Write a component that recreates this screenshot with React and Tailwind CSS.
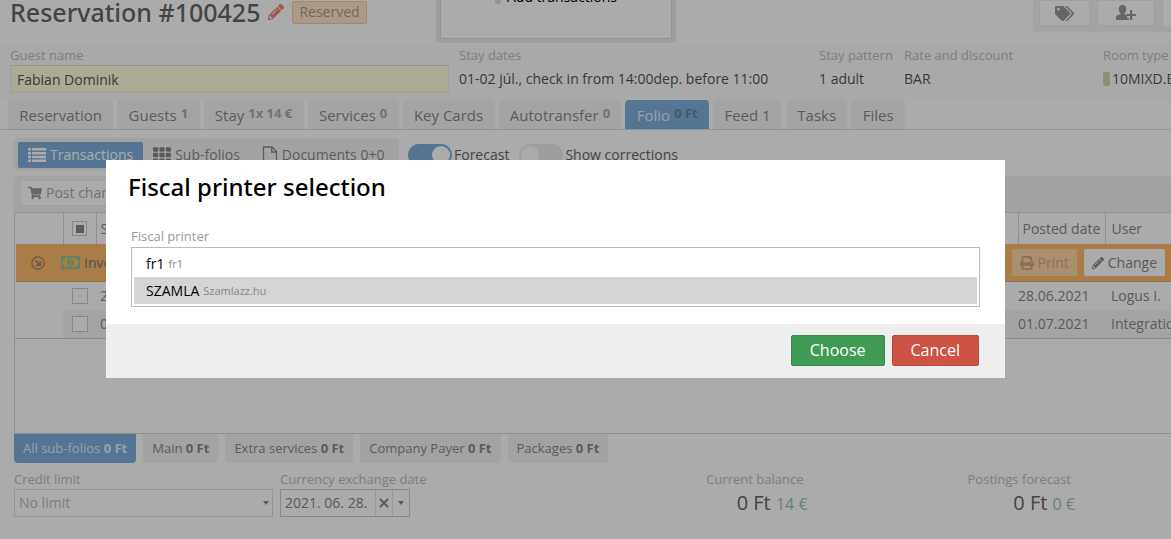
import React, { useState } from 'react';
import { FaPencilAlt, FaTags, FaTh, FaShoppingCart, FaPrint } from 'react-icons/fa';

const tabs = [
  { name: 'Reservation' },
  { name: 'Guests', badge: '1' },
  { name: 'Stay', badge: '1x 14 €' },
  { name: 'Services', badge: '0' },
  { name: 'Key Cards' },
  { name: 'Autotransfer', badge: '0' },
  { name: 'Folio', badge: '0 Ft' },
  { name: 'Feed 1' },
  { name: 'Tasks' },
  { name: 'Files' },
];

const subFolios = ['All sub-folios', 'Main', 'Extra services', 'Company Payer', 'Packages'];

const postings = [
  { id: 1, start: '28.06.2021', posted: '28.06.2021', user: 'Logus I.' },
  { id: 2, start: '01.07.2021', posted: '01.07.2021', user: 'Integration' },
];

const printers = [
  { code: 'fr1', title: 'fr1' },
  { code: 'SZAMLA', title: 'Szamlazz.hu' },
];

function UserPlusIcon() {
  return (
    <svg viewBox="0 0 20 16" className="w-5 h-4" fill="currentColor">
      <path d="M6.500 0C8.700 0 10.200 1.500 10.200 4c0 1.700-.7 3.300-1.700 4.200v1l2.500 1v2.500h1.800V15H0v-2.500c0-1.200.6-1.800 1.600-2.200l2.900-1.100v-1C3.500 7.300 2.800 5.700 2.800 4 2.800 1.500 4.300 0 6.500 0z" />
      <path d="M14 5h2.200v3.900H20v2.200h-3.800V15H14v-3.900h-3.500V8.900H14z" />
    </svg>
  );
}

function ListIcon() {
  return (
    <svg viewBox="0 0 18 14" className="w-[18px] h-3.5" fill="currentColor">
      <path d="M0 0h3v2.500H0zM0 4h3v2.500H0zM0 7.800h3v2.500H0zM0 11.500h3V14H0zM4 0h14v2.500H4zM4 4h14v2.500H4zM4 7.800h14v2.500H4zM4 11.500h14V14H4z" />
    </svg>
  );
}

function FileIcon() {
  return (
    <svg viewBox="0 0 16 18" className="w-4 h-[18px]" fill="none" stroke="currentColor" strokeWidth="1.300">
      <path d="M1.500 1h8.500l4.500 4.500V17h-13zM9.700 1v5h4.800" />
    </svg>
  );
}

function MoneyIcon() {
  return (
    <svg viewBox="0 0 19 13" className="w-[19px] h-[13px] text-[#7fc69a]">
      <path fill="currentColor" fillRule="evenodd" d="M0 0h19v13H0zM4 1.500A2.500 2.500 0 0 1 1.500 4v5A2.500 2.500 0 0 1 4 11.500h11A2.500 2.500 0 0 1 17.500 9V4A2.500 2.500 0 0 1 15 1.500z" />
      <ellipse cx="9.500" cy="6.500" rx="3.200" ry="4.200" fill="currentColor" />
      <path d="M8.300 5l1.400-1v4.700M8 9h3.200" stroke="#fcba6c" strokeWidth="1.100" fill="none" />
    </svg>
  );
}

function CollapseIcon() {
  return (
    <svg viewBox="0 0 14 14" className="w-3.5 h-3.5 text-[#9a8368]" fill="none" stroke="currentColor" strokeWidth="1.300">
      <circle cx="7" cy="7" r="6.200" />
      <path d="M4.500 4.500l4.500 4.500M9.300 5v4.300H5" strokeWidth="1.600" />
    </svg>
  );
}

function Caret() {
  return (
    <svg viewBox="0 0 6 4" className="w-1.5 h-1 text-[#888]" fill="currentColor">
      <path d="M0 0h6L3 4z" />
    </svg>
  );
}

function Toggle({ id, label, checked, onChange }) {
  return (
    <div className="flex items-center gap-0.5">
      <input id={id} type="checkbox" role="switch" className="sr-only" checked={checked} onChange={onChange} />
      <label
        htmlFor={id}
        aria-label={label}
        className={`flex items-center w-11 h-[22px] rounded-full p-0.5 ${checked ? 'justify-end bg-[#7eafdc]' : 'justify-start bg-[#ececec]'}`}
      >
        <span className="w-[18px] h-[18px] rounded-full bg-white" />
      </label>
      <label htmlFor={id} className="text-sm text-[#666]">{label}</label>
    </div>
  );
}

function Info({ label, children }) {
  return (
    <div className="whitespace-nowrap">
      <p className="text-[13px] leading-5 text-[#bbb]">{label}</p>
      <p className="text-sm leading-7 text-[#555]">{children}</p>
    </div>
  );
}

function Balance({ label, amount, foreign }) {
  return (
    <div className="text-right whitespace-nowrap">
      <p className="pr-1 text-[13px] leading-5 text-[#bbb]">{label}</p>
      <p className="text-xl leading-7 text-[#666]">
        {amount} <span className="text-base text-[#9bbfae]">{foreign}</span>
      </p>
    </div>
  );
}

function Header() {
  return (
    <header className="relative flex justify-between h-[45px] pl-2.5">
      <div className="flex items-center h-6 gap-2">
        <h1 className="font-['Noto_Sans'] font-medium text-[25px] leading-6 text-[#666]">Reservation #100425</h1>
        <button type="button" aria-label="Edit" className="text-[#ef8277] text-base"><FaPencilAlt /></button>
        <span className="h-[23px] px-1.5 border border-[#f5cf94] bg-[#ffe6cb] rounded-xs text-sm leading-5 text-[#b09a80]">Reserved</span>
      </div>
      <div className="absolute right-[495px] bottom-0.5 w-60 h-16 bg-[#eee] rounded-b p-1">
        <div className="h-full border border-[#ddd] bg-white flex justify-center gap-1.5 text-sm text-black">
          <span className="w-1.5 h-1.5 mt-3.5 rounded-full bg-[#ddd]" />
          <span className="leading-[26px]">Add transactions</span>
        </div>
      </div>
      <div className="flex gap-[7px] h-8 pl-1.5 pb-1.5 rounded-bl bg-[#f4f4f4]">
        <button type="button" aria-label="Tags" className="flex items-center justify-center w-[51px] h-[26px] bg-white border border-[#eee] rounded-xs text-[19px] text-[#999]"><FaTags /></button>
        <button type="button" aria-label="Add guest" className="flex items-center justify-center w-[58px] h-[26px] bg-white border border-[#eee] rounded-xs text-[#999]"><UserPlusIcon /></button>
        <button type="button" aria-label="More" className="w-[9px] h-[26px] bg-white border-l border-[#eee]" />
      </div>
    </header>
  );
}

function PrinterDialog() {
  const [selected, setSelected] = useState('SZAMLA');

  return (
    <div className="fixed inset-0 bg-black/33 flex items-center justify-center pr-[60px] pb-0.5">
      <div role="dialog" aria-labelledby="dialog-title" className="w-full max-w-[899px] bg-white">
        <div className="px-[25px] pt-2.5 pb-[17px]">
          <h2 id="dialog-title" className="-ml-[3px] font-['Noto_Sans'] font-medium text-2xl leading-[34px] text-black">Fiscal printer selection</h2>
          <p id="printer-label" className="mt-[22px] text-[13px] leading-5 text-[#999]">Fiscal printer</p>
          <ul role="listbox" aria-labelledby="printer-label" className="mt-px border border-[#bbb] p-0.5">
            {printers.map((p) => (
              <li
                key={p.code}
                role="option"
                aria-selected={selected === p.code}
                onClick={() => setSelected(p.code)}
                className={`flex items-center gap-1 h-[27px] px-3 pt-0.5 text-black text-sm ${selected === p.code ? 'bg-[#d6d4d4]' : 'bg-white'}`}
              >
                {p.code} <span className="text-[11px] text-[#888]">{p.title}</span>
              </li>
            ))}
          </ul>
        </div>
        <div className="flex justify-end gap-[7px] px-[26px] pt-[11px] pb-3 bg-[#eee] text-white text-base">
          <button type="button" className="h-[31px] px-[18px] rounded-xs bg-[#409b55] border border-[#37894a]">Choose</button>
          <button type="button" className="h-[31px] px-[18px] rounded-xs bg-[#cd5443] border border-[#b94a3b]">Cancel</button>
        </div>
      </div>
    </div>
  );
}

export default function App() {
  const [forecast, setForecast] = useState(true);
  const [corrections, setCorrections] = useState(false);

  return (
    <div className="min-h-screen bg-white overflow-hidden font-['Open_Sans',sans-serif]">
      <Header />

      <section className="grid grid-cols-[minmax(0,439fr)_minmax(0,350fr)_minmax(0,75fr)_minmax(0,189fr)_minmax(0,68fr)] gap-2.5 pl-2.5 h-[55px] bg-[#fdfdfd]">
        <div>
          <label htmlFor="guest" className="block text-[13px] leading-5 text-[#bbb]">Guest name</label>
          <input id="guest" defaultValue="Fabian Dominik" className="block w-full h-7 px-1.5 border border-[#eee] border-t-[#ddd] bg-[#ffffdf] text-sm text-[#555]" />
        </div>
        <Info label="Stay dates">01-02 júl., check in from 14:00dep. before 11:00</Info>
        <Info label="Stay pattern">1 adult</Info>
        <Info label="Rate and discount">BAR</Info>
        <Info label="Room type">
          <span className="inline-block w-[7px] h-3.5 mr-0.5 rounded-xs bg-[#c9dba0] align-[-2px]" />10MIXD.BED
        </Info>
      </section>

      <nav className="border-b border-[#cfdbe8] pl-2">
        <div className="flex gap-1 max-w-[897px]">
          {tabs.map((tab) => (
            <a
              key={tab.name}
              href="#"
              className={`flex grow items-center justify-center gap-1 h-[29px] pt-0.5 rounded-t text-[15px] whitespace-nowrap ${tab.name === 'Folio' ? 'bg-[#7eafdc] text-[#e8eff5]' : 'bg-[#f5f5f5] text-[#888]'}`}
            >
              {tab.name}
              {tab.badge && (
                <span className={`pb-1 text-[13px] font-bold ${tab.name === 'Folio' ? 'text-[#6b7f92]' : 'text-[#aaa]'}`}>{tab.badge}</span>
              )}
            </a>
          ))}
        </div>
      </nav>

      <main className="pl-3.5">
        <div className="flex items-center gap-[9px] pt-2">
          <div className="flex items-center h-[33px] w-[385px] px-1 rounded bg-[#f4f4f4] text-sm text-[#888] whitespace-nowrap">
            <button type="button" className="flex shrink-0 items-center gap-1 h-[26px] px-2.5 rounded-xs bg-[#7eafdc] text-white"><ListIcon />Transactions</button>
            <button type="button" className="flex shrink-0 items-center gap-1 h-[26px] px-2.5"><FaTh className="text-lg" />Sub-folios</button>
            <button type="button" className="flex shrink-0 items-center gap-1 h-[26px] px-3"><FileIcon />Documents 0+0</button>
          </div>
          <div className="flex gap-2.5">
            <Toggle id="forecast" label="Forecast" checked={forecast} onChange={() => setForecast(!forecast)} />
            <Toggle id="corrections" label="Show corrections" checked={corrections} onChange={() => setCorrections(!corrections)} />
          </div>
        </div>

        <div className="mt-[5px] h-9 px-1.5 pt-1 rounded-t bg-[#f4f4f4]">
          <button type="button" className="flex items-center gap-1 h-[26px] px-[7px] border border-[#eee] rounded-xs bg-white text-sm text-[#aaa]"><FaShoppingCart className="text-[#999]" />Post charge</button>
        </div>

        <div className="h-[222px] border-l border-y border-[#d5d5d5]">
          <table className="w-full table-fixed border-collapse text-sm text-left text-[#888]">
            <colgroup>
              <col className="w-12" />
              <col className="w-[33px]" />
              <col />
              <col className="w-[87px]" />
              <col className="w-[66px]" />
            </colgroup>
            <thead>
              <tr className="h-[31px]">
                <th />
                <th className="border-x border-[#d5d5d5]">
                  <span className="flex items-center justify-center w-[15px] h-[15px] mx-auto border border-[#ccc]"><span className="w-2 h-2 bg-[#888]" /></span>
                </th>
                <th className="px-1 font-normal">Service</th>
                <th className="px-1 font-normal border-x border-[#d5d5d5] whitespace-nowrap">Posted date</th>
                <th className="px-1.5 font-normal">User</th>
              </tr>
            </thead>
            <tbody>
              <tr className="h-[38px]">
                <td colSpan="5" className="p-0 pl-px">
                  <div className="flex items-center h-[38px] pl-[15px] pr-1.5 bg-[#fcba6c] border-b border-[#d8a569]">
                    <CollapseIcon />
                    <span className="flex items-center gap-1 ml-4 text-[#777]"><MoneyIcon />Invoice</span>
                    <span className="flex gap-[7px] ml-auto">
                      <button type="button" disabled className="flex items-center gap-1 h-[27px] px-2 rounded-xs bg-[#fdd5a5] text-[#c9a983]"><FaPrint />Print</button>
                      <button type="button" className="flex items-center gap-1 h-[27px] px-2 rounded-xs bg-white"><FaPencilAlt className="text-xs" />Change</button>
                    </span>
                  </div>
                </td>
              </tr>
              {postings.map((row) => (
                <tr key={row.id} className="h-7 even:bg-white odd:bg-[#f5f5f5] last:border-b border-[#ccc]">
                  <td className="bg-white" />
                  <td className="text-center">
                    <input type="checkbox" aria-label={`Select ${row.start}`} className="block mx-auto appearance-none w-4 h-4 border border-[#ccc] bg-white" />
                  </td>
                  <td className="px-1">{row.start}</td>
                  <td>{row.posted}</td>
                  <td className="px-1.5 whitespace-nowrap">{row.user}</td>
                </tr>
              ))}
            </tbody>
          </table>
        </div>

        <div className="flex gap-[7px] text-[13px]">
          {subFolios.map((name, i) => (
            <button
              key={name}
              type="button"
              className={`h-[29px] px-[9px] rounded-b-sm whitespace-nowrap ${i === 0 ? 'bg-[#7eafdc] text-[#e8eff5]' : 'bg-[#f4f4f4] text-[#888]'}`}
            >
              {name} <b>0 Ft</b>
            </button>
          ))}
        </div>

        <div className="flex pt-1.5">
          <div className="w-[259px]">
            <label htmlFor="limit" className="block text-[13px] leading-5 text-[#bbb]">Credit limit</label>
            <div className="relative">
              <select id="limit" className="block appearance-none w-full h-7 px-1 border border-[#ddd] text-sm text-[#bbb]">
                <option>No limit</option>
              </select>
              <span className="absolute right-1 top-3 pointer-events-none"><Caret /></span>
            </div>
          </div>
          <div className="ml-[7px]">
            <label htmlFor="rate-date" className="block text-[13px] leading-5 text-[#bbb]">Currency exchange date</label>
            <div className="flex w-[130px] h-7 border border-[#ccc]">
              <input id="rate-date" defaultValue="2021. 06. 28." className="w-[94px] px-1 text-sm text-[#888]" />
              <button type="button" aria-label="Clear" className="flex items-center justify-center w-[17px] border-l border-[#e5e5e5] text-[#888]">
                <svg viewBox="0 0 10 10" className="w-2.5 h-2.5" stroke="currentColor" strokeWidth="2"><path d="M1 1l8 8M9 1l-8 8" /></svg>
              </button>
              <button type="button" aria-label="Open calendar" className="flex items-center justify-center w-[17px] border-l border-[#e5e5e5]"><Caret /></button>
            </div>
          </div>
          <div className="flex gap-40 ml-auto pr-24">
            <Balance label="Current balance" amount="0 Ft" foreign="14 €" />
            <Balance label="Postings forecast" amount="0 Ft" foreign="0 €" />
          </div>
        </div>
      </main>

      <PrinterDialog />
    </div>
  );
}
